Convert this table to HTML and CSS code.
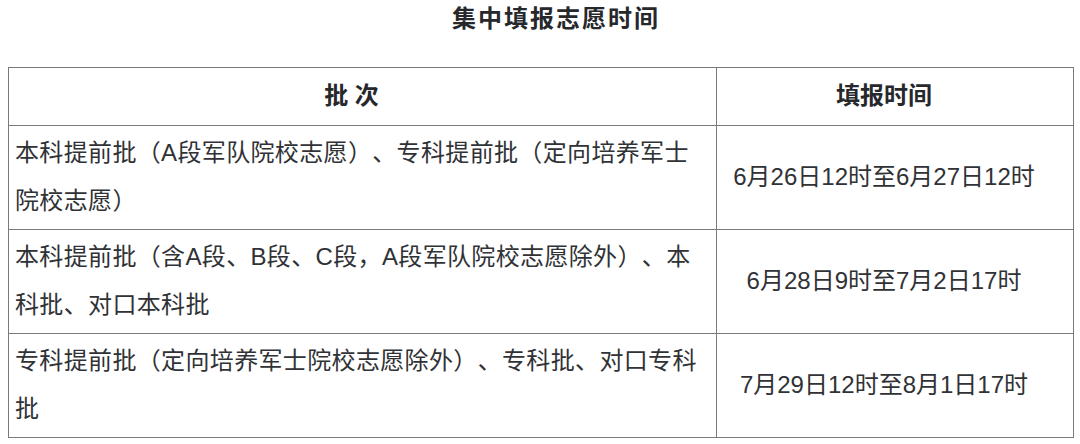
FILE: index.html
```html
<!DOCTYPE html>
<html lang="zh-CN">
<head>
<meta charset="utf-8">
<title>集中填报志愿时间</title>
<link rel="stylesheet" href="styles.css">
</head>
<body>
<div class="page">
  <h1 class="title">集中填报志愿时间</h1>
  <table class="schedule">
    <colgroup>
      <col class="col-batch">
      <col class="col-time">
    </colgroup>
    <thead>
      <tr>
        <th class="head-cell">批 次</th>
        <th class="head-cell">填报时间</th>
      </tr>
    </thead>
    <tbody>
      <tr>
        <td class="batch-cell">本科提前批（A段军队院校志愿）、专科提前批（定向培养军士<br>院校志愿）</td>
        <td class="time-cell">6月26日12时至6月27日12时</td>
      </tr>
      <tr>
        <td class="batch-cell">本科提前批（含A段、B段、C段，A段军队院校志愿除外）、本<br>科批、对口本科批</td>
        <td class="time-cell">6月28日9时至7月2日17时</td>
      </tr>
      <tr>
        <td class="batch-cell">专科提前批（定向培养军士院校志愿除外）、专科批、对口专科<br>批</td>
        <td class="time-cell">7月29日12时至8月1日17时</td>
      </tr>
    </tbody>
  </table>
  <div class="bottom-strip"></div>
</div>
</body>
</html>
```

FILE: styles.css
```css
html, body {
  margin: 0;
  padding: 0;
  background: #ffffff;
}

body {
  width: 1080px;
  height: 444px;
  overflow: hidden;
  font-family: "Liberation Sans", "Noto Sans CJK SC", sans-serif;
  color: #303236;
  text-spacing-trim: space-all;
}

.page {
  padding: 0 0 0 8px;
  display: flex;
  flex-direction: column;
}

.title {
  margin: 0 0 29px 0;
  padding-left: 30px;
  width: 1036px;
  text-align: center;
  font-size: 24px;
  line-height: 38px;
  font-weight: 700;
  letter-spacing: 2px;
  color: #26282c;
}

.schedule {
  border-collapse: collapse;
  width: 1065px;
  table-layout: fixed;
  font-size: 24px;
  line-height: 48px;
}

.col-batch {
  width: 708px;
}

.col-time {
  width: 357px;
}

.schedule th,
.schedule td {
  border: 1px solid #7a7a7a;
  vertical-align: middle;
}

.head-cell {
  padding: 4px 28px 5px 6px;
  text-align: center;
  font-weight: 700;
  color: #26282c;
}

.batch-cell {
  padding: 3px 4px 4px 6px;
  text-align: left;
  white-space: nowrap;
  letter-spacing: 0.35px;
}

.time-cell {
  padding: 3px 28px 4px 6px;
  text-align: center;
  white-space: nowrap;
}

.bottom-strip {
  margin-top: 6px;
  margin-left: -8px;
  height: 10px;
  background: #f3f3f3;
}
```
